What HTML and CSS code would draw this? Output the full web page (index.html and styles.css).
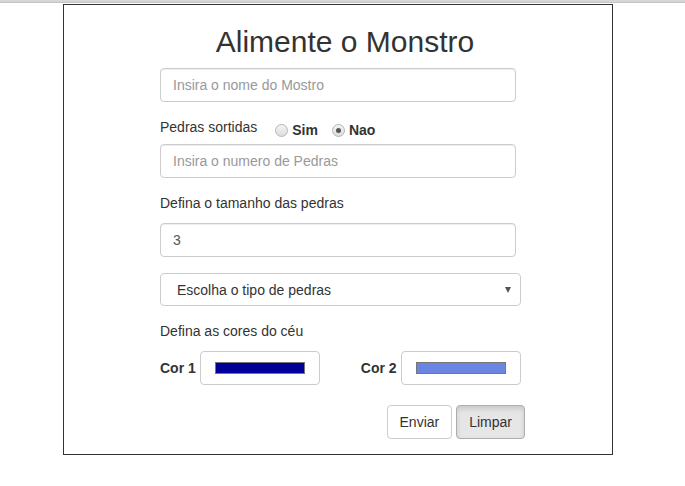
FILE: index.html
```html
<!DOCTYPE html>
<html lang="pt">
<head>
<meta charset="utf-8">
<title>Alimente o Monstro</title>
<link rel="stylesheet" href="styles.css">
</head>
<body>
<div class="topbar"></div>
<div class="card">
  <form class="form">
    <h1 class="title">Alimente o Monstro</h1>
    <input class="field field-name" type="text" placeholder="Insira o nome do Mostro">
    <div class="radio-row">
      <span class="radio-label">Pedras sortidas</span>
      <label class="radio"><span class="dot"></span>Sim</label>
      <label class="radio"><span class="dot checked"></span>Nao</label>
    </div>
    <input class="field field-count" type="text" placeholder="Insira o numero de Pedras">
    <p class="label label-size">Defina o tamanho das pedras</p>
    <input class="field field-size" type="text" value="3">
    <div class="select">
      <span>Escolha o tipo de pedras</span>
      <span class="arrow"></span>
    </div>
    <p class="label label-colors">Defina as cores do céu</p>
    <div class="colors">
      <div class="color-group">
        <b class="color-name">Cor 1</b>
        <div class="color-box"><span class="swatch swatch-dark"></span></div>
      </div>
      <div class="color-group">
        <b class="color-name">Cor 2</b>
        <div class="color-box"><span class="swatch swatch-light"></span></div>
      </div>
    </div>
    <div class="actions">
      <button type="button" class="btn">Enviar</button>
      <button type="button" class="btn btn-active">Limpar</button>
    </div>
  </form>
</div>
</body>
</html>
```
FILE: styles.css
```css
* { box-sizing: border-box; }
html, body { margin: 0; padding: 0; background: #fff; }
body {
  font-family: "Liberation Sans", Arial, sans-serif;
  font-size: 14px;
  line-height: 20px;
  color: #333;
}
.topbar {
  height: 3px;
  background: #d6d6d6;
  border-bottom: 1px solid #c4c4c4;
}
.card {
  margin: 1px 0 0 63px;
  width: 550px;
  height: 451px;
  border: 1px solid #333;
}
.form {
  width: 370px;
  margin-left: 96px;
  display: flex;
  flex-direction: column;
  align-items: flex-start;
}
.title {
  align-self: stretch;
  text-align: center;
  font-size: 30px;
  line-height: 33px;
  font-weight: 400;
  margin: 20px 0 0 0;
  color: #333;
}
.field {
  display: block;
  width: 356px;
  height: 34px;
  padding: 6px 12px;
  border: 1px solid #ccc;
  border-radius: 4px;
  font-family: inherit;
  font-size: 14px;
  color: #555;
  background: #fff;
  box-shadow: inset 0 1px 1px rgba(0,0,0,.075);
  outline: none;
}
.field::placeholder { color: #999; }
.field-name { margin-top: 10px; }
.radio-row {
  margin-top: 15px;
  height: 20px;
  display: flex;
  align-items: flex-start;
}
.radio-label { margin-right: 18px; }
.radio {
  display: flex;
  align-items: center;
  font-weight: 700;
  padding-top: 3px;
  margin-right: 14px;
  line-height: 20px;
}
.dot {
  width: 13px;
  height: 13px;
  border-radius: 50%;
  border: 1px solid #b5b5b5;
  background: linear-gradient(#f4f4f4, #dcdcdc);
  margin-right: 4px;
  position: relative;
}
.dot.checked::after {
  content: "";
  position: absolute;
  left: 3px; top: 3px;
  width: 5px; height: 5px;
  border-radius: 50%;
  background: #555;
}
.field-count { margin-top: 7px; }
.label { margin: 0; }
.label-size { margin-top: 15px; }
.field-size { margin-top: 10px; }
.select {
  margin-top: 16px;
  width: 361px;
  height: 33px;
  border: 1px solid #ccc;
  border-radius: 4px;
  padding: 0 9px 0 16px;
  display: flex;
  align-items: center;
  justify-content: space-between;
  color: #333;
}
.arrow {
  width: 0; height: 0;
  border-left: 3px solid transparent;
  border-right: 3px solid transparent;
  border-top: 6px solid #555;
}
.label-colors { margin-top: 15px; }
.colors {
  margin-top: 10px;
  display: flex;
  gap: 41px;
}
.color-group {
  display: flex;
  align-items: center;
  gap: 4px;
}
.color-name { font-weight: 700; }
.color-box {
  width: 120px;
  height: 34px;
  border: 1px solid #ccc;
  border-radius: 4px;
  padding: 0 14px;
  display: flex;
  align-items: center;
}
.swatch {
  display: block;
  width: 90px;
  height: 12px;
  border: 1px solid #777;
}
.swatch-dark { background: #000099; }
.swatch-light { background: #6a86e2; }
.actions {
  margin-top: 20px;
  width: 365px;
  display: flex;
  justify-content: flex-end;
  gap: 4px;
}
.btn {
  height: 34px;
  padding: 6px 12px;
  font-family: inherit;
  font-size: 14px;
  line-height: 20px;
  color: #333;
  background: #fff;
  border: 1px solid #ccc;
  border-radius: 4px;
}
.btn-active {
  background: #e6e6e6;
  border-color: #adadad;
  box-shadow: inset 0 3px 5px rgba(0,0,0,.125);
}
```
